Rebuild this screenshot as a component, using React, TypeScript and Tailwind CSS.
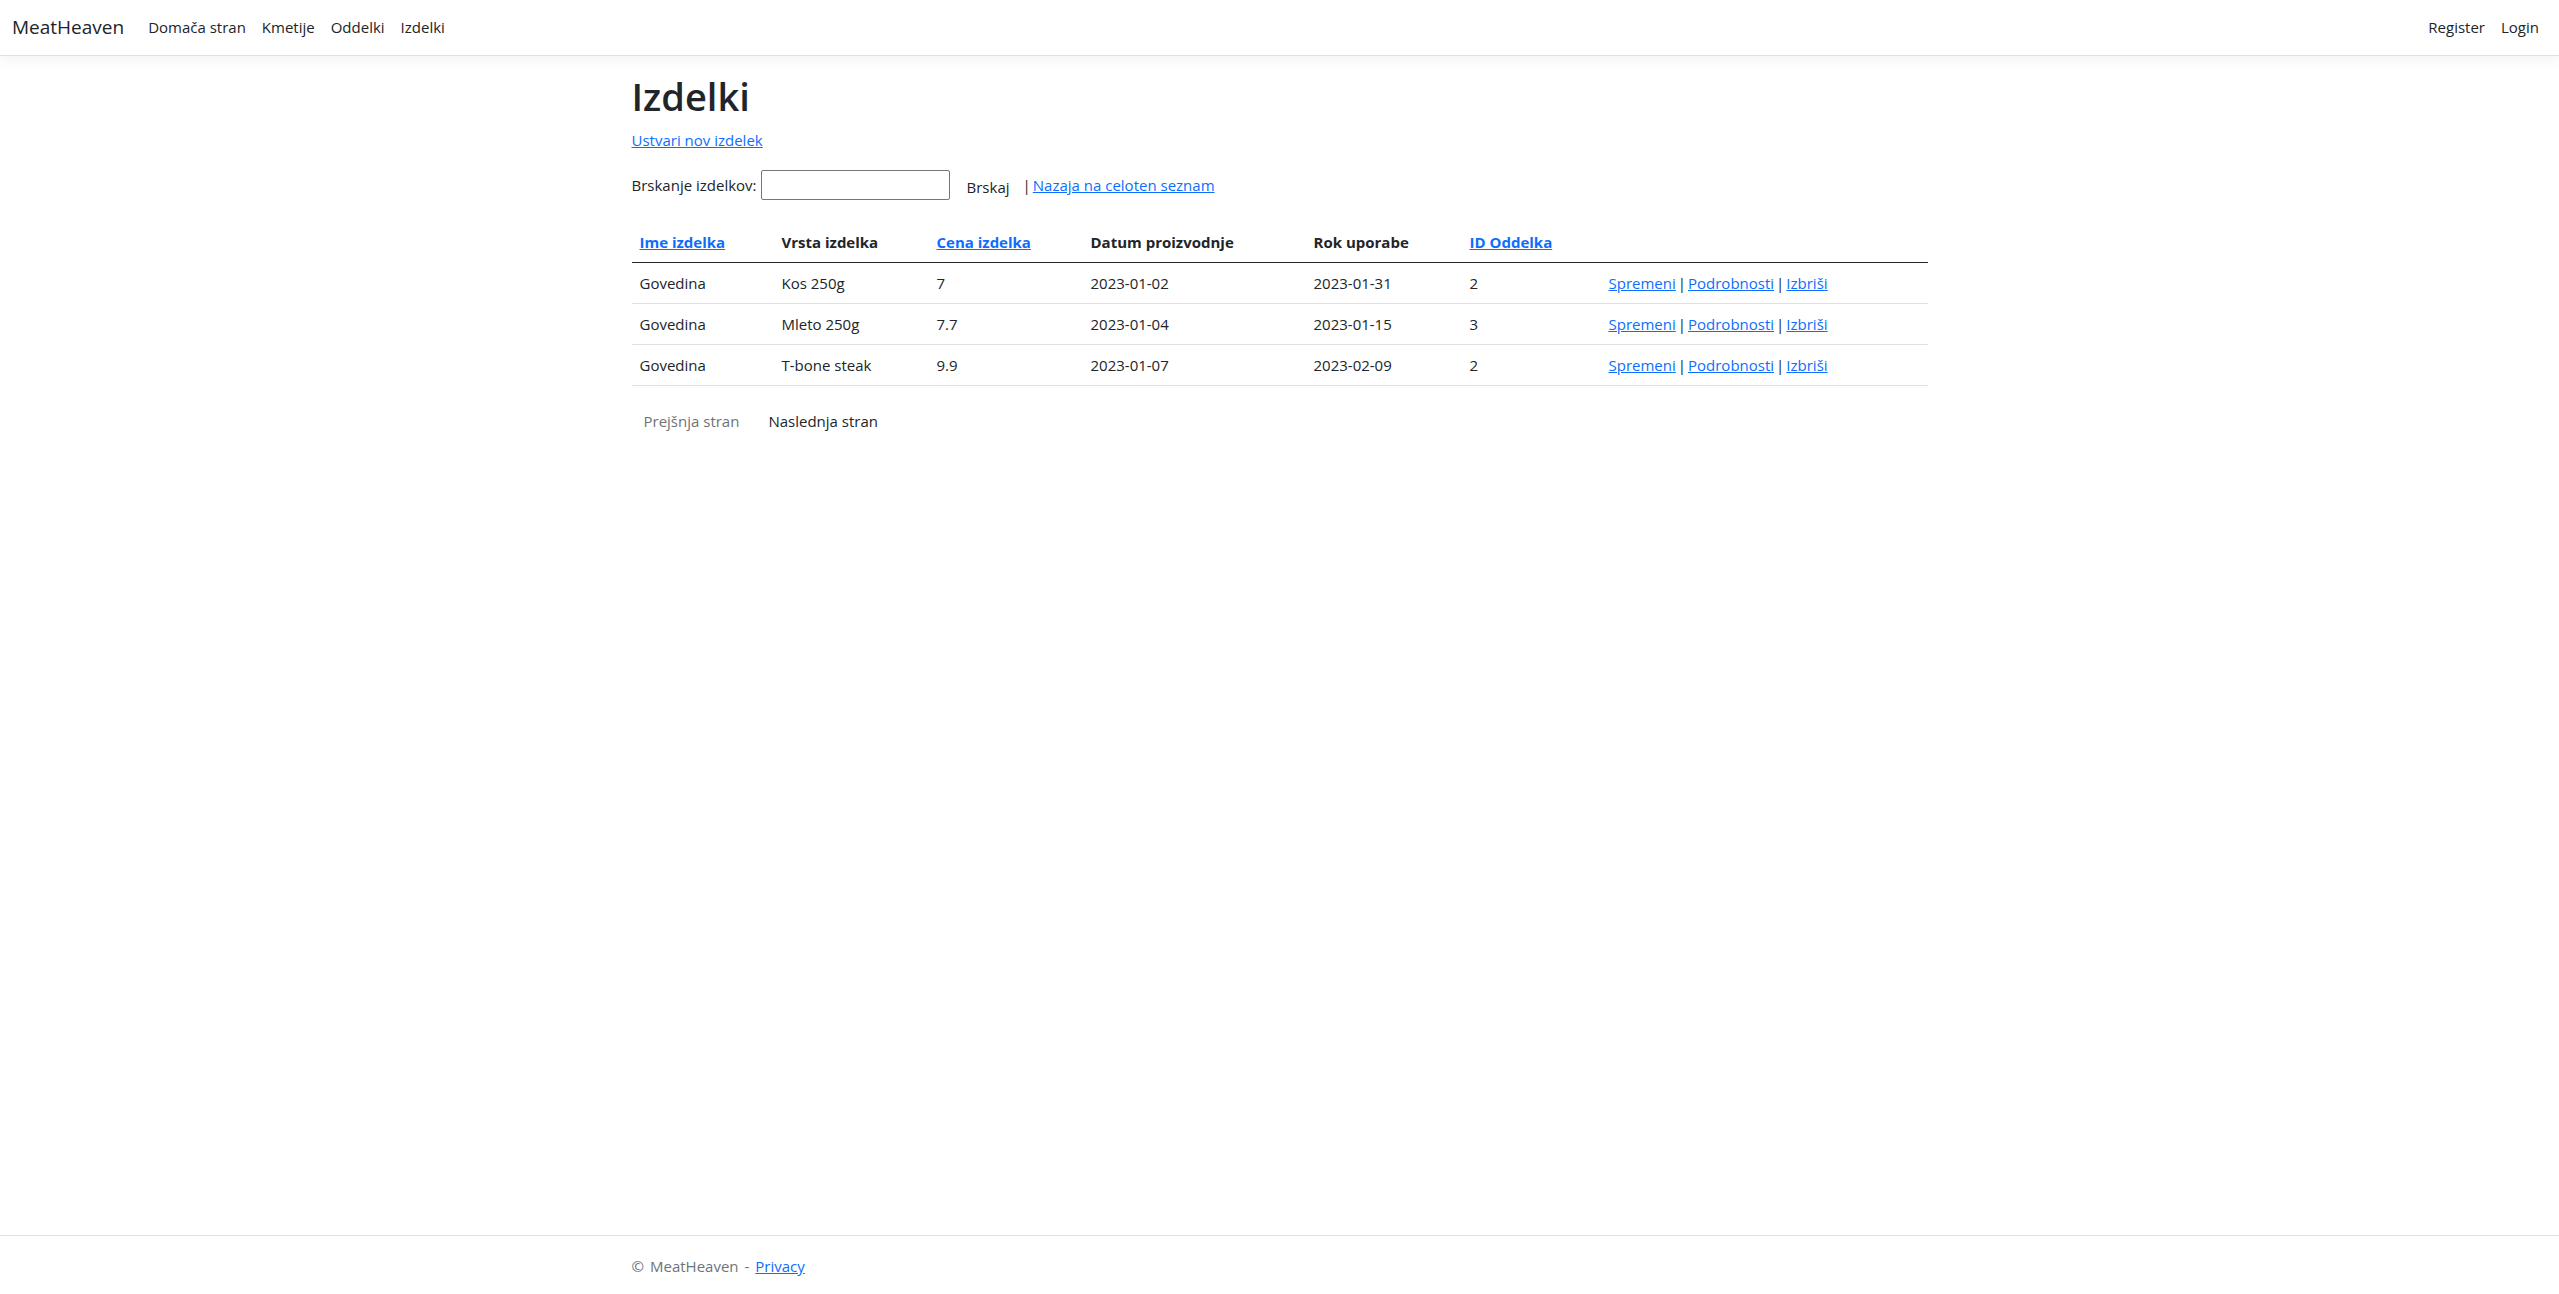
const link = 'text-[#0d6efd] underline';
const headCell = 'border-b border-[#212529] p-2 font-bold';
const bodyCell = 'border-b border-[#dee2e6] p-2';

const navItems = ['Domača stran', 'Kmetije', 'Oddelki', 'Izdelki'];
const accountItems = ['Register', 'Login'];

const products = [
  { name: 'Govedina', kind: 'Kos 250g', price: '7', made: '2023-01-02', expires: '2023-01-31', dept: '2' },
  { name: 'Govedina', kind: 'Mleto 250g', price: '7.7', made: '2023-01-04', expires: '2023-01-15', dept: '3' },
  { name: 'Govedina', kind: 'T-bone steak', price: '9.9', made: '2023-01-07', expires: '2023-02-09', dept: '2' },
];

function NavList({ items }: { items: string[] }) {
  return (
    <ul className="flex">
      {items.map((item) => (
        <li key={item}>
          <a href="#" className="block p-2">{item}</a>
        </li>
      ))}
    </ul>
  );
}

export default function App() {
  return (
    <div className="flex min-h-screen flex-col bg-white font-['Open_Sans',sans-serif] text-[15px] leading-6 text-[#212529]">
      <header className="mb-4">
        <nav className="flex items-center border-b border-[#dee2e6] px-3 pt-[7px] pb-2 shadow-[0_4px_12px_rgba(0,0,0,0.05)]">
          <a href="#" className="mr-4 text-[19px]">MeatHeaven</a>
          <div className="flex grow justify-between">
            <NavList items={navItems} />
            <NavList items={accountItems} />
          </div>
        </nav>
      </header>

      <main className="mx-auto w-full max-w-[1320px] grow px-3">
        <h1 className="mb-2 text-[38px] leading-[48px] font-semibold">Izdelki</h1>
        <p className="mb-4">
          <a href="#" className={link}>Ustvari nov izdelek</a>
        </p>

        <form className="mb-4 flex items-start leading-[34px]" onSubmit={(e) => e.preventDefault()}>
          <label htmlFor="search" className="mr-1">Brskanje izdelkov:</label>
          <input id="search" type="text" className="my-0.5 h-[30px] w-[189px] rounded-[2px] border border-[#767676] bg-white px-1" />
          <button type="submit" className="ml-1 px-[13px] py-[7px] leading-6">Brskaj</button>
          <span className="mr-0.5">|</span>
          <a href="#" className={link}>Nazaja na celoten seznam</a>
        </form>

        <table className="mb-4 w-full table-fixed border-separate border-spacing-0 text-left">
          <colgroup>
            <col className="w-[142px]" />
            <col className="w-[155px]" />
            <col className="w-[154px]" />
            <col className="w-[223px]" />
            <col className="w-[156px]" />
            <col className="w-[139px]" />
            <col />
          </colgroup>
          <thead>
            <tr>
              <th className={headCell}><a href="#" className={link}>Ime izdelka</a></th>
              <th className={headCell}>Vrsta izdelka</th>
              <th className={headCell}><a href="#" className={link}>Cena izdelka</a></th>
              <th className={headCell}>Datum proizvodnje</th>
              <th className={headCell}>Rok uporabe</th>
              <th className={headCell}><a href="#" className={link}>ID Oddelka</a></th>
              <th className={headCell}></th>
            </tr>
          </thead>
          <tbody>
            {products.map((p) => (
              <tr key={p.kind}>
                <td className={bodyCell}>{p.name}</td>
                <td className={bodyCell}>{p.kind}</td>
                <td className={bodyCell}>{p.price}</td>
                <td className={bodyCell}>{p.made}</td>
                <td className={bodyCell}>{p.expires}</td>
                <td className={bodyCell}>{p.dept}</td>
                <td className={bodyCell}>
                  <div className="flex gap-0.5">
                    <a href="#" className={link}>Spremeni</a>
                    <span>|</span>
                    <a href="#" className={link}>Podrobnosti</a>
                    <span>|</span>
                    <a href="#" className={link}>Izbriši</a>
                  </div>
                </td>
              </tr>
            ))}
          </tbody>
        </table>

        <div className="flex gap-1">
          <button type="button" disabled className="px-3 py-[7px] opacity-65">Prejšnja stran</button>
          <button type="button" className="px-[13px] py-[7px]">Naslednja stran</button>
        </div>
      </main>

      <footer className="border-t border-[#dee2e6] pt-[18px] pb-4 text-[#6c757d]">
        <div className="mx-auto flex w-full max-w-[1320px] gap-1.5 px-3">
          <span>©</span>
          <span>MeatHeaven</span>
          <span>-</span>
          <a href="#" className={link}>Privacy</a>
        </div>
      </footer>
    </div>
  );
}
